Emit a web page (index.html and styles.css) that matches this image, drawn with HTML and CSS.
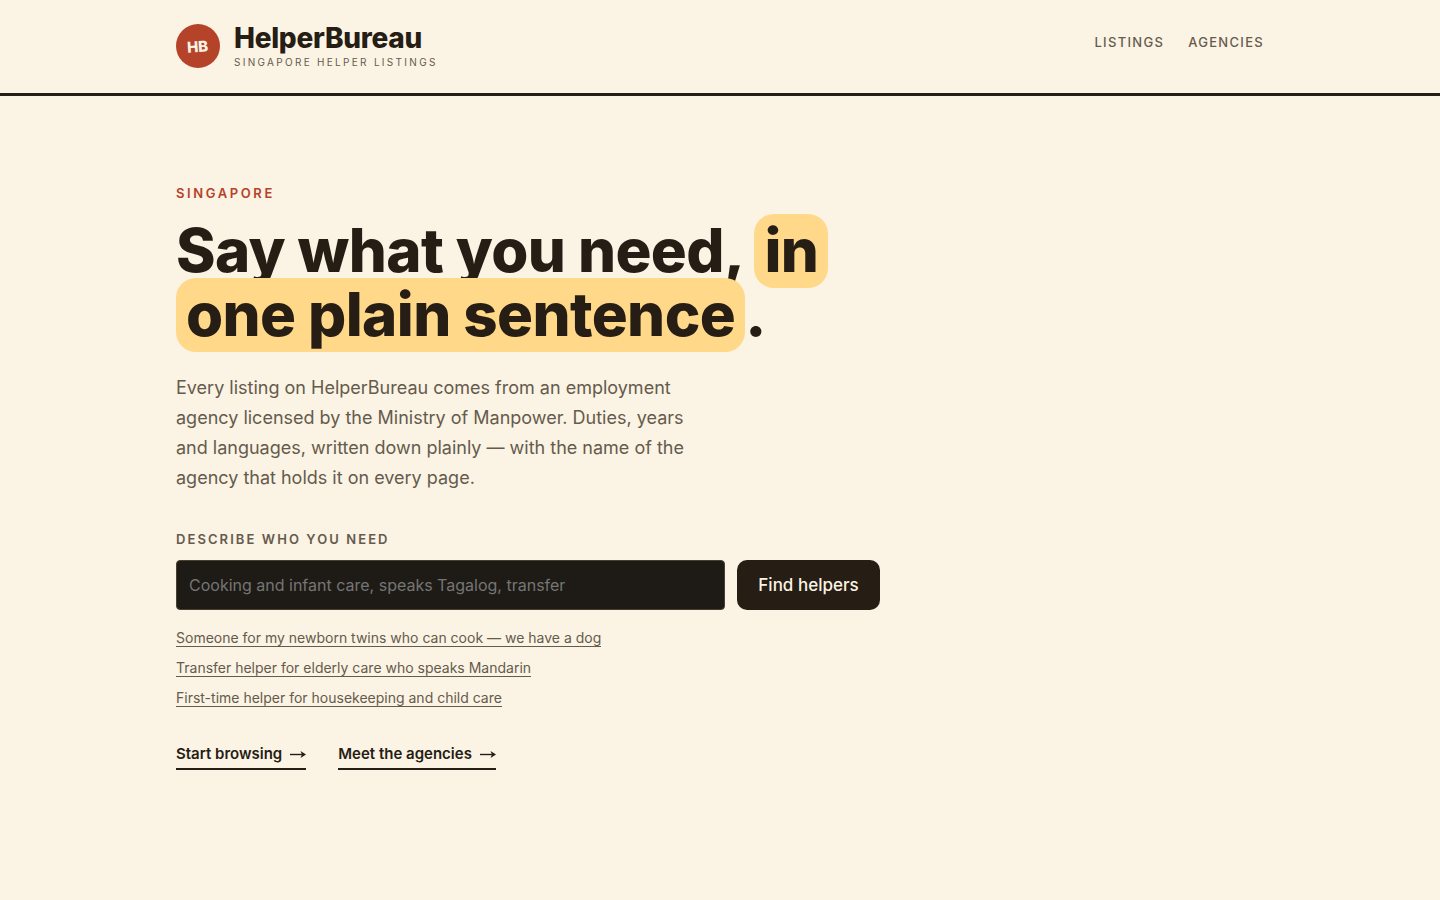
FILE: index.html
```html
<!DOCTYPE html>
<html lang="en">
<head>
<meta charset="utf-8">
<meta name="viewport" content="width=device-width, initial-scale=1">
<title>HelperBureau</title>
<link rel="stylesheet" href="styles.css">
</head>
<body>
<header class="site-header">
  <div class="container header-row">
    <a class="brand" href="#">
      <span class="brand-mark"><span class="brand-initials">HB</span></span>
      <span class="brand-text">
        <span class="brand-name">HelperBureau</span>
        <span class="brand-tagline">Singapore helper listings</span>
      </span>
    </a>
    <nav class="site-nav" aria-label="Main">
      <a class="nav-link" href="#listings">Listings</a>
      <a class="nav-link" href="#agencies">Agencies</a>
    </nav>
  </div>
</header>
<main class="container hero">
  <p class="eyebrow">Singapore</p>
  <h1 class="title">Say what you need, <span class="highlight">in<br>one plain sentence</span>.</h1>
  <p class="lede">Every listing on HelperBureau comes from an employment agency licensed by the Ministry of Manpower. Duties, years and languages, written down plainly — with the name of the agency that holds it on every page.</p>
  <form class="search">
    <label class="search-label" for="need">Describe who you need</label>
    <div class="search-row">
      <input class="search-input" id="need" type="text" placeholder="Cooking and infant care, speaks Tagalog, transfer">
      <button class="search-button" type="submit">Find helpers</button>
    </div>
  </form>
  <ul class="examples">
    <li><a class="example-link" href="#">Someone for my newborn twins who can cook — we have a dog</a></li>
    <li><a class="example-link" href="#">Transfer helper for elderly care who speaks Mandarin</a></li>
    <li><a class="example-link" href="#">First-time helper for housekeeping and child care</a></li>
  </ul>
  <div class="actions">
    <a class="action-link" href="#listings">Start browsing
      <svg class="arrow" viewBox="0 0 16 10" aria-hidden="true"><path d="M0 5.5H14"/><path class="arrow-head" d="M10.5 2L16 5.5L10.5 9L12 5.5Z"/></svg></a>
    <a class="action-link" href="#agencies">Meet the agencies
      <svg class="arrow" viewBox="0 0 16 10" aria-hidden="true"><path d="M0 5.5H14"/><path class="arrow-head" d="M10.5 2L16 5.5L10.5 9L12 5.5Z"/></svg></a>
  </div>
</main>
</body>
</html>
```
FILE: styles.css
```css
:root {
  --paper: #fbf3e4;
  --ink: #261d14;
  --muted: #655b4d;
  --red: #b5432a;
  --yellow: #ffd88a;
}

* { box-sizing: border-box; }

body {
  margin: 0;
  background: var(--paper);
  color: var(--ink);
  font-family: Inter, "Liberation Sans", sans-serif;
  font-size: 16px;
}

a { color: inherit; text-decoration: none; }

.container {
  max-width: 1136px;
  margin: 0 auto;
  padding: 0 24px;
}

.site-header { border-bottom: 3px solid var(--ink); }

.header-row {
  display: flex;
  justify-content: space-between;
  align-items: flex-start;
  padding-top: 24px;
  padding-bottom: 24px;
}

.brand { display: flex; align-items: flex-start; gap: 14px; }

.brand-mark {
  display: grid;
  place-items: center;
  width: 44px;
  height: 44px;
  border-radius: 50%;
  background: var(--red);
  color: var(--paper);
  font-size: 15px;
  font-weight: 800;
}

.brand-initials { transform: rotate(-4deg); }

.brand-text { display: flex; flex-direction: column; }

.brand-name {
  font-size: 28px;
  line-height: 28px;
  font-weight: 800;
  letter-spacing: -0.01em;
}

.brand-tagline {
  margin-top: 3px;
  font-size: 10px;
  line-height: 14px;
  letter-spacing: 0.23em;
  text-transform: uppercase;
  color: var(--muted);
}

.site-nav { display: flex; gap: 24px; padding-top: 8px; }

.nav-link {
  font-size: 13px;
  line-height: 20px;
  font-weight: 500;
  letter-spacing: 0.1em;
  text-transform: uppercase;
  color: var(--muted);
}

.hero { padding-top: 87px; padding-bottom: 88px; }

.eyebrow {
  margin: 0 0 15px;
  font-size: 13px;
  line-height: 20px;
  font-weight: 600;
  letter-spacing: 0.2em;
  text-transform: uppercase;
  color: var(--red);
}

.title {
  max-width: 720px;
  margin: 0;
  font-size: 60px;
  line-height: 64px;
  font-weight: 800;
  letter-spacing: -0.01em;
}

.highlight {
  padding: 0 10px 2px;
  border-radius: 20px;
  background: var(--yellow);
  -webkit-box-decoration-break: clone;
  box-decoration-break: clone;
}

.lede {
  max-width: 544px;
  margin: 27px 0 36px;
  font-size: 18px;
  line-height: 30px;
  color: var(--muted);
}

.search-label {
  display: block;
  margin-bottom: 11px;
  font-size: 13px;
  line-height: 20px;
  font-weight: 600;
  letter-spacing: 0.16em;
  text-transform: uppercase;
  color: var(--muted);
}

.search-row { display: flex; gap: 12px; max-width: 704px; }

.search-input {
  flex: 1;
  min-width: 0;
  height: 50px;
  padding: 0 12px;
  border: 1px solid #4a4032;
  border-radius: 4px;
  background: #1e1b16;
  color: var(--paper);
  font: inherit;
}

.search-input::placeholder { color: #757575; opacity: 1; }

.search-button {
  width: 143px;
  height: 50px;
  padding: 0;
  border: 0;
  border-radius: 10px;
  background: var(--ink);
  color: var(--paper);
  font: inherit;
  font-size: 17px;
  font-weight: 500;
}

.examples {
  display: grid;
  gap: 10px;
  margin: 18px 0 0;
  padding: 0;
  list-style: none;
  font-size: 14px;
  line-height: 20px;
  color: var(--muted);
}

.example-link { border-bottom: 1px solid currentColor; }

.actions { display: flex; flex-wrap: wrap; gap: 32px; margin-top: 36px; }

.action-link {
  display: flex;
  align-items: center;
  gap: 8px;
  padding-bottom: 4px;
  border-bottom: 2px solid var(--ink);
  font-size: 15px;
  line-height: 20px;
  font-weight: 600;
}

.arrow {
  width: 16px;
  height: 10px;
  fill: none;
  stroke: currentColor;
  stroke-width: 1.4;
}

.arrow-head { fill: currentColor; stroke: none; }
```
